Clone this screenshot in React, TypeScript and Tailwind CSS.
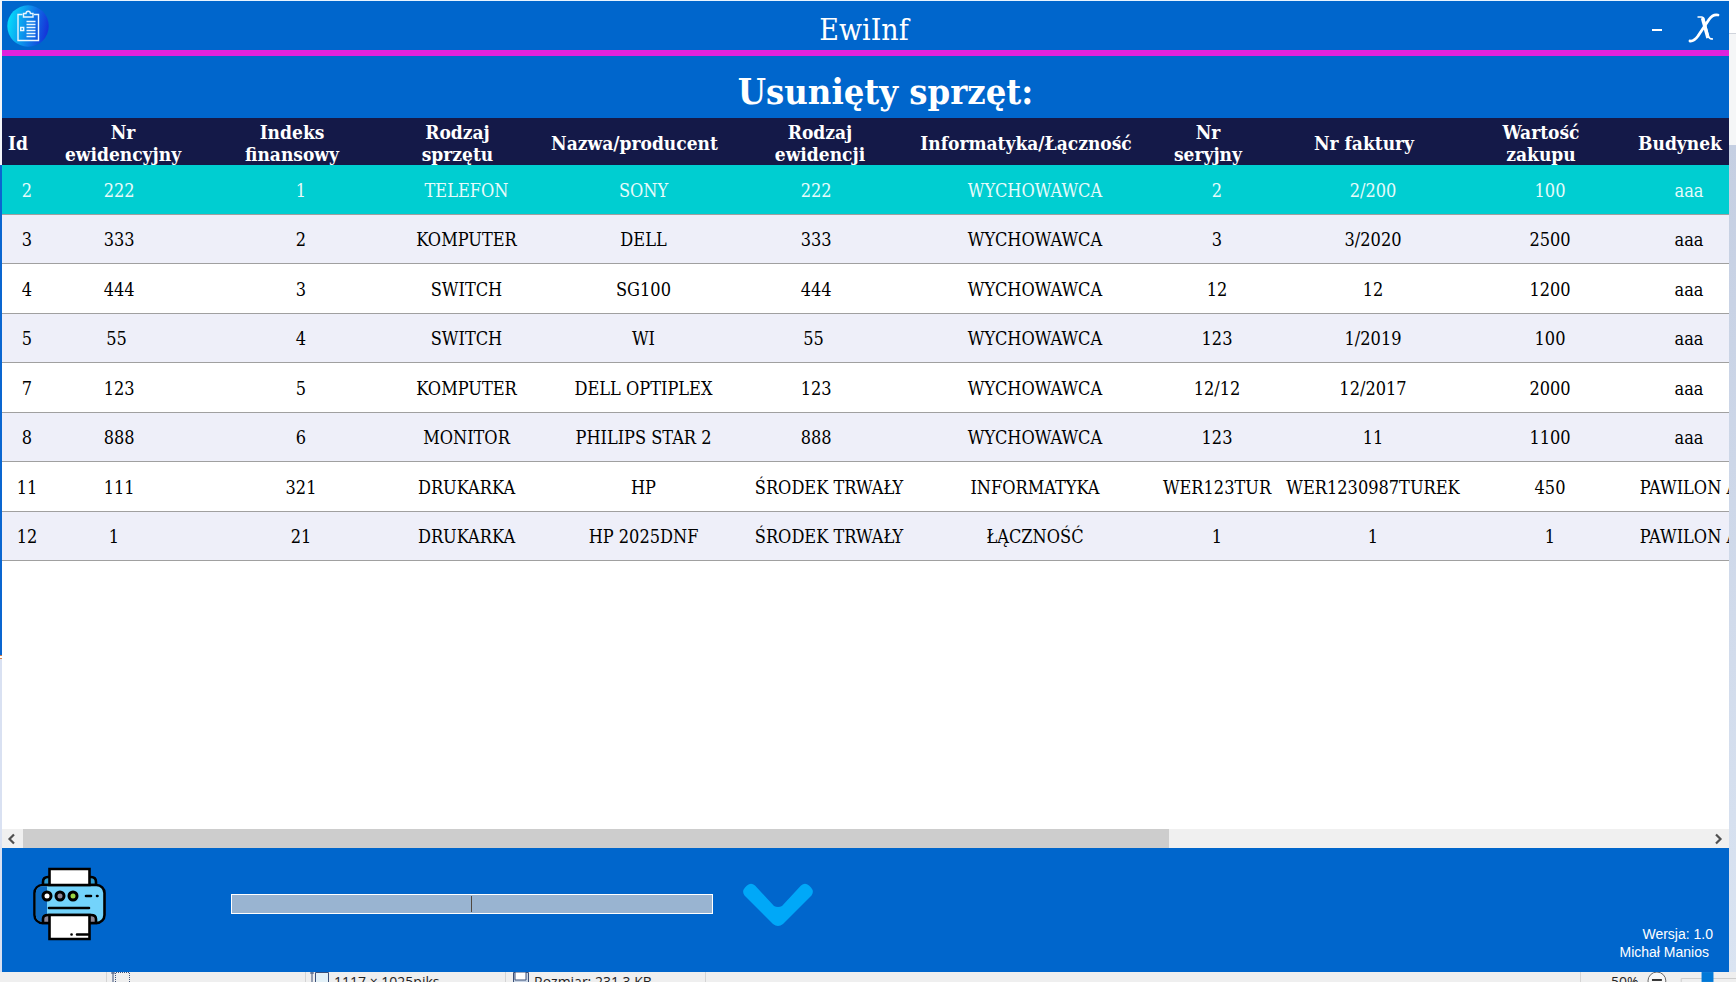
import { useState } from "react";

type Row = string[];

const columns = [
  { label: "Id", width: "w-[50px]" },
  { label: "Nr\newidencyjny", width: "w-[160px]" },
  { label: "Indeks\nfinansowy", width: "w-[178px]" },
  { label: "Rodzaj\nsprzętu", width: "w-[153px]" },
  { label: "Nazwa/producent", width: "w-[201px]" },
  { label: "Rodzaj\newidencji", width: "w-[170px]" },
  { label: "Informatyka/Łączność", width: "w-[242px]" },
  { label: "Nr\nseryjny", width: "w-[122px]" },
  { label: "Nr faktury", width: "w-[190px]" },
  { label: "Wartość\nzakupu", width: "w-[164px]" },
  { label: "Budynek", width: "w-[114px]" },
];

// The registry number and register kind are fixed-width, space-padded fields.
const rows: Row[] = [
  ["2", "222     ", "1", "TELEFON", "SONY", "222     ", "WYCHOWAWCA", "2", "2/200", "100", "aaa"],
  ["3", "333     ", "2", "KOMPUTER", "DELL", "333     ", "WYCHOWAWCA", "3", "3/2020", "2500", "aaa"],
  ["4", "444     ", "3", "SWITCH", "SG100", "444     ", "WYCHOWAWCA", "12", "12", "1200", "aaa"],
  ["5", "55      ", "4", "SWITCH", "WI", "55      ", "WYCHOWAWCA", "123", "1/2019", "100", "aaa"],
  ["7", "123     ", "5", "KOMPUTER", "DELL OPTIPLEX", "123     ", "WYCHOWAWCA", "12/12", "12/2017", "2000", "aaa"],
  ["8", "888     ", "6", "MONITOR", "PHILIPS STAR 2", "888     ", "WYCHOWAWCA", "123", "11", "1100", "aaa"],
  ["11", "111     ", "321", "DRUKARKA", "HP", "ŚRODEK TRWAŁY", "INFORMATYKA", "WER123TUR", "WER1230987TUREK", "450", "PAWILON A"],
  ["12", "1       ", "21", "DRUKARKA", "HP 2025DNF", "ŚRODEK TRWAŁY", "ŁĄCZNOŚĆ", "1", "1", "1", "PAWILON A"],
];

function Logo() {
  return (
    <svg viewBox="0 0 42 42" className="size-[42px]" aria-hidden="true">
      <defs>
        <linearGradient id="logo" x1="0" x2="1" y1="0.4" y2="0.6">
          <stop offset="0" stopColor="#06dcfb" />
          <stop offset="1" stopColor="#1530d8" />
        </linearGradient>
      </defs>
      <circle cx="21" cy="21" r="20.7" fill="url(#logo)" />
      <g fill="none" stroke="#e8f6ff" strokeWidth="1.4">
        <path d="M15.500 9.500H11v26h20.500v-26h-4.500" />
        <path d="M16.500 12v-3.500h2.500a2.200 2.200 0 0 1 4.400 0H26V12z" />
        <path d="M19.500 16.500h9M19.500 19.500h9M19.500 22.500h9M19.500 25.500h9M19.500 28.500h9M19.500 31.500h9" />
        <path d="M13.700 22.500h3v3h-3z" />
      </g>
    </svg>
  );
}

function PrinterIcon() {
  return (
    <svg viewBox="0 0 74 74" className="size-[74px]" aria-hidden="true">
      <g stroke="#000" strokeWidth="2.600">
        <path d="M11 18v-3q0-5 5-5h43q5 0 5 5v3z" fill="#2f9bd0" />
        <rect x="2.500" y="18" width="70" height="38" rx="8" fill="#73d3fb" />
      </g>
      <path d="M10 19.300h5V54.700h-5A6.200 6.200 0 0 1 3.800 48.500v-23A6.200 6.200 0 0 1 10 19.300z" fill="#0d6cc4" />
      <g stroke="#000" strokeWidth="2.600">
        <path d="M11 56v-4q0-4 5-4h43q5 0 5 4v4z" fill="#8d8797" />
        <path d="M17.500 2h40v16h-40zM17.500 48h40v24h-40z" fill="#fff" />
      </g>
      <g stroke="#000" strokeWidth="3">
        <circle cx="15" cy="29" r="4" fill="#fff" />
        <circle cx="28" cy="29" r="4" fill="#8d8797" />
        <circle cx="41" cy="29" r="4" fill="#9ad546" />
      </g>
      <g stroke="#000" strokeWidth="2.600" strokeLinecap="round">
        <path d="M54 29h5M65 29h.5M17 41h40M45 67.500h11M39.500 67.500h.1" />
      </g>
    </svg>
  );
}

function Arrow({ flip = false }: { flip?: boolean }) {
  return (
    <svg viewBox="0 0 10 12" className="h-3 w-2.5" aria-hidden="true">
      <path d={flip ? "M2 1.500l4.500 4.500L2 10.500" : "M8 1.500L3.500 6 8 10.500"} fill="none" stroke="#505050" strokeWidth="2.200" />
    </svg>
  );
}

export default function App() {
  const [selected, setSelected] = useState(0);
  return (
    <div className="flex h-screen flex-col overflow-hidden bg-[#efefef] font-['Liberation_Sans',sans-serif]">
      <div className="flex min-h-0 flex-1">
        <div className="flex w-0.5 shrink-0 flex-col">
          <div className="h-[165px] bg-[#f4f6fa]" />
          <div className="h-[490px] bg-[#0a66d0]" />
          <div className="h-1 border-y border-[#d9824a] bg-white" />
          <div className="flex-1 bg-[#d9e1f2]" />
        </div>

        <main className="flex min-w-0 flex-1 flex-col border-t border-[#e8f4ff] bg-[#0066cc] text-white">
          <header className="flex h-[55px] shrink-0 items-start border-b-[6px] border-[#e022dc]">
            <div className="flex h-[49px] flex-1 items-center pl-[5px]">
              <Logo />
            </div>
            <div className="flex h-[49px] items-center pt-2 font-['Curlz_MT','DejaVu_Serif_Condensed','DejaVu_Serif',serif] text-[30px]">
              EwiInf
            </div>
            <div className="flex h-[49px] flex-1 items-center justify-end gap-5 pr-2">
              <button type="button" aria-label="Minimalizuj" className="flex h-8 w-5 items-center justify-center pt-2">
                <span className="h-0.5 w-2.5 bg-white" />
              </button>
              <button type="button" aria-label="Zamknij" className="flex h-10 w-[34px] items-center justify-center pt-1">
                <svg viewBox="0 0 32 30" className="h-[30px] w-[34px]" fill="none" stroke="#fff" strokeLinecap="round" aria-hidden="true">
                  <path d="M9.500 4h4q2 0 2.500 2.500l4.500 17q.500 2.500 4.500 2.500" strokeWidth="1.500" strokeLinecap="butt" />
                  <path d="M14.500 5l5.500 20" strokeWidth="3.500" strokeLinecap="butt" />
                  <path d="M2 28q4 .500 8-5L21 6.500Q25 .800 30 2" strokeWidth="2.800" />
                </svg>
              </button>
            </div>
          </header>

          <h1 className="flex h-[62px] shrink-0 items-center justify-center pt-2 pl-10 font-['DejaVu_Serif_Condensed','DejaVu_Serif',serif] text-[36px] font-bold">
            Usunięty sprzęt:
          </h1>

          <div className="min-h-0 flex-1 overflow-hidden bg-white">
            <table className="w-[1744px] table-fixed border-separate border-spacing-0 font-['DejaVu_Serif_Condensed','DejaVu_Serif',serif] text-[18px] leading-[22px]">
              <thead>
                <tr className="h-[47px] bg-[#141948] text-[19px]">
                  {columns.map((c) => (
                    <th key={c.label} scope="col" className={`${c.width} p-0 pt-0.5 whitespace-pre`}>
                      <div className="-ml-[18px] flex justify-center">{c.label}</div>
                    </th>
                  ))}
                </tr>
              </thead>
              <tbody>
                {rows.map((row, i) => (
                  <tr
                    key={row[0]}
                    onClick={() => setSelected(i)}
                    className={`h-[49px] odd:h-[50px] ${
                      i === selected ? "bg-[#00ced1] text-[#e6fbfb]" : i % 2 ? "bg-[#eeeff9] text-black" : "bg-white text-black"
                    }`}
                  >
                    {row.map((cell, j) => (
                      <td key={j} className="border-b border-[#a0a0a0] p-0 pt-0.5 whitespace-pre">
                        <div className="flex justify-center">{cell}</div>
                      </td>
                    ))}
                  </tr>
                ))}
              </tbody>
            </table>
          </div>

          <div className="flex h-[19px] shrink-0 bg-[#f0f0f0]">
            <button type="button" aria-label="Przewiń w lewo" className="flex w-[21px] items-center pl-1">
              <Arrow />
            </button>
            <div className="flex-1">
              <div className="h-full w-[68%] bg-[#cdcdcd]" />
            </div>
            <button type="button" aria-label="Przewiń w prawo" className="flex w-[21px] items-center justify-center">
              <Arrow flip />
            </button>
          </div>

          <footer className="flex h-[124px] shrink-0 items-center pr-4 pl-[30px]">
            <button type="button" aria-label="Drukuj" className="mb-3">
              <PrinterIcon />
            </button>
            <div className="relative mb-3 ml-[125px] flex h-5">
              <input
                type="text"
                aria-label="Szukaj"
                className="h-5 w-[482px] border border-white bg-[#99b4d1] text-center text-sm text-black caret-[#504840] outline-none"
              />
              <span className="pointer-events-none absolute inset-y-0.5 left-1/2 -ml-px w-px bg-[#504840]" />
            </div>
            <button type="button" aria-label="Pokaż więcej" className="mb-2.5 ml-[30px]">
              <svg viewBox="0 0 70 44" className="h-11 w-[70px]" aria-hidden="true">
                <path
                  d="M1.500 12.500q-3-4 .500-8l2-2q4-3.500 8 0L31 23q4 2 8 0L58 2.500q4-3.500 8 0l2 2q3.500 4 .500 8L40 41q-5 4-10 0z"
                  fill="#00a8f8"
                />
              </svg>
            </button>
            <div className="ml-auto self-end pb-[11px] text-right text-[14px] leading-[18px]">
              <p>Wersja: 1.0</p>
              <p className="pr-1">Michał Manios</p>
            </div>
          </footer>
        </main>

        <div className="flex w-[7px] shrink-0 flex-col">
          <div className="h-[34px] border-b border-[#d0d4dc] bg-white" />
          <div className="h-[111px] bg-[#f5f6f7]" />
          <div className="flex-1 bg-gradient-to-b from-[#c5cfe2] to-[#dae4f2]" />
        </div>
      </div>

      <div className="flex h-2.5 shrink-0 overflow-hidden font-['Open_Sans','Noto_Sans',sans-serif] text-[14px] leading-5 text-[#222]">
        <div className="w-[107px] border-r border-[#d4d4d4]" />
        <div className="flex w-[199px] border-r border-[#d4d4d4] pl-1">
          <svg viewBox="0 0 20 10" className="h-2.5 w-5" aria-hidden="true">
            <path d="M2 0v10M0 1h4" stroke="#3c5078" />
            <path d="M4.500 10V.500h14V10" fill="none" stroke="#3c5078" strokeDasharray="1 1" />
          </svg>
        </div>
        <div className="flex w-[200px] gap-1 border-r border-[#d4d4d4] pl-1">
          <svg viewBox="0 0 20 10" className="h-2.5 w-5" aria-hidden="true">
            <path d="M2 0v10M0 1h4" stroke="#3c5078" />
            <path d="M5.500 11V.500h13V11" fill="#e3f1f8" stroke="#3c5078" />
          </svg>
          <span>1117 × 1025piks</span>
        </div>
        <div className="flex w-[200px] gap-1 border-r border-[#d4d4d4] pl-1.5">
          <svg viewBox="0 0 18 10" className="h-2.5 w-[18px]" aria-hidden="true">
            <path d="M1.500 11V.500h15V11" fill="#c8d4e4" stroke="#3c5078" />
            <path d="M3 0h11v8H3z" fill="#fff" stroke="#3c5078" />
          </svg>
          <span>Rozmiar: 231,3 KB</span>
        </div>
        <div className="flex-1" />
        <div className="flex w-[156px] border-l border-[#d4d4d4] pl-[30px]">
          <span className="w-[36px]">50%</span>
          <svg viewBox="0 0 90 10" className="h-2.5 w-[90px]" aria-hidden="true">
            <circle cx="10" cy="9" r="9" fill="#f8f8f8" stroke="#666" />
            <path d="M5 8h10" stroke="#333" strokeWidth="2" />
            <path d="M34.500 10V6.500H90" fill="none" stroke="#ccc" />
            <path d="M55 0h12v10H55z" fill="#0078d7" />
          </svg>
        </div>
      </div>
    </div>
  );
}
